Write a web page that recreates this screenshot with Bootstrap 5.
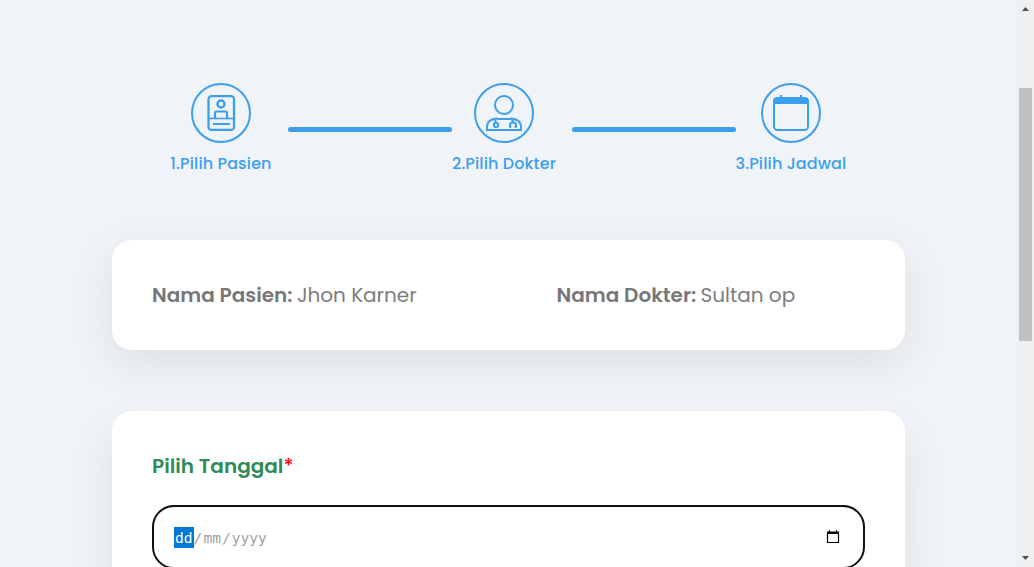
<!DOCTYPE html>
<html lang="id">
<head>
<meta charset="utf-8">
<meta name="viewport" content="width=device-width, initial-scale=1">
<title>Pilih Jadwal</title>
<link href="https://cdn.jsdelivr.net/npm/bootstrap@5.3.0/dist/css/bootstrap.min.css" rel="stylesheet">
<style>
html, body { height: 100%; overflow: hidden; }
body { background: #f0f3f8; color: #777; font-family: Poppins, Inter, "Open Sans", sans-serif; }
.page { padding-top: 83px; height: 567px; }
.steps { height: 96px; color: #3c9fee; }
.step-ring { width: 60px; height: 60px; border: 2px solid #3c9fee; }
.step-name { font-size: 16px; font-weight: 500; line-height: 24px; margin-top: 9px; letter-spacing: .12px; }
.step-line { width: 164px; height: 5px; border-radius: 3px; background: #3c9fee; margin-top: 44px; }
.s1 { width: 102px; margin-right: 16px; } .s2 { width: 104px; margin-right: 16px; } .s3 { width: 110px; margin-right: 1px; }
.panel { width: 793px; margin-left: 112px; border-radius: 20px; background: #fff; padding: 40px; box-shadow: 0 13px 44px rgba(0,0,0,.085); font-size: 20px; line-height: 30px; }
.info-panel { height: 110px; margin-top: 61px; }
.date-panel { height: 156px; margin-top: 61px; padding-bottom: 0; border-radius: 20px 20px 0 0; box-shadow: 0 22px 44px rgba(0,0,0,.085); }
.info-item { width: 404.5px; }
.info-item b { font-weight: 600; }
.info-item span { margin-left: -1px; letter-spacing: -.02px; color: #7c7c7c; }
.date-title { color: #2e8b57; font-weight: 600; }
.date-title span { color: #f00; font-weight: 500; }
.date-clip { height: 62px; margin-top: 24px; overflow: hidden; }
.date-box { height: 64px; padding: 0 23px 0 20px; border: 2px solid #111; border-radius: 22px; }
.date-mask { font: 14.6px/21px "DejaVu Sans Mono", monospace; color: #a0a0a0; }
.date-mask span { padding: 0 1px; }
.date-mask .picked { background: #0078d7; color: #fff; display: inline-block; }
.scroll-rail { width: 17px; background: #f0f0f0; }
.scroll-grip { width: 13px; height: 253px; background: #c1c1c1; margin-top: 74px; }
</style>
</head>
<body class="d-flex">
<main class="page flex-grow-1">
  <div class="steps d-flex justify-content-center">
    <div class="s1 d-flex flex-column align-items-center flex-shrink-0">
      <div class="step-ring rounded-circle d-flex align-items-center justify-content-center flex-shrink-0">
        <svg width="36" height="36" viewBox="0 0 36 36" fill="none" stroke="currentColor" stroke-width="2.300"><rect x="5.500" y="1.100" width="25.500" height="33.800" rx="3"/><circle cx="18" cy="9" r="3.500" stroke-width="2.500"/><path d="M12 23v-5q0-1.500 1.500-1.500h9q1.500 0 1.500 1.500v5M10 29h17" stroke-width="2.200"/><path d="M5.500 23.500h25" stroke-width="1.600"/></svg>
      </div>
      <div class="step-name text-nowrap">1.Pilih Pasien</div>
    </div>
    <div class="step-line flex-shrink-0"></div>
    <div class="s2 d-flex flex-column align-items-center flex-shrink-0">
      <div class="step-ring rounded-circle d-flex align-items-center justify-content-center flex-shrink-0">
        <svg width="36" height="36" viewBox="0 0 36 36" fill="none" stroke="currentColor" stroke-width="2"><circle cx="18" cy="10" r="9"/><path d="M12 23.500Q1 24 1 32v3h34v-3q0-8-11-8.500M11.500 24h13M9.500 24v4M26.500 24v3.500"/><circle cx="10" cy="30" r="2.200"/><path d="M25.500 31.800H24v-1.800q0-2.500 3-2.500t3 2.500v1.800h-1.500"/></svg>
      </div>
      <div class="step-name text-nowrap">2.Pilih Dokter</div>
    </div>
    <div class="step-line flex-shrink-0"></div>
    <div class="s3 d-flex flex-column align-items-center flex-shrink-0">
      <div class="step-ring rounded-circle d-flex align-items-center justify-content-center flex-shrink-0">
        <svg width="36" height="36" viewBox="0 0 36 36" fill="none" stroke="currentColor" stroke-width="2"><rect x="1" y="3.500" width="34" height="31.500" rx="3.500"/><path d="M1 8V6.500Q1 3 4.500 3h27Q35 3 35 6.500V8z" fill="currentColor"/><path d="M8 0v4M28 0v4"/></svg>
      </div>
      <div class="step-name text-nowrap">3.Pilih Jadwal</div>
    </div>
  </div>
  <section class="panel info-panel d-flex">
    <div class="info-item flex-shrink-0"><b>Nama Pasien:</b> <span>Jhon Karner</span></div>
    <div class="text-nowrap info-item"><b>Nama Dokter:</b> <span>Sultan op</span></div>
  </section>
  <section class="panel date-panel">
    <div class="date-title">Pilih Tanggal<span>*</span></div>
    <div class="date-clip">
      <div class="date-box d-flex align-items-center justify-content-between">
        <div class="date-mask text-nowrap"><span class="picked">dd</span>/<span>mm</span>/<span>yyyy</span></div>
        <svg width="14" height="16" viewBox="0 0 14 16"><path d="M1.500 3.500h11v10h-11z" fill="none" stroke="#000" stroke-width="1.200"/><path d="M1 2.500h12v2.500H1zM3 1.200h1v2H3zM10 1.200h1v2h-1z"/></svg>
      </div>
    </div>
  </section>
</main>
<aside class="scroll-rail d-flex flex-column align-items-center flex-shrink-0">
  <svg width="17" height="14" class="flex-shrink-0"><path d="M5 11h7L8.500 7z" fill="#505050"/></svg>
  <div class="scroll-grip flex-shrink-0"></div>
  <svg width="17" height="14" class="flex-shrink-0 mt-auto"><path d="M5 3h7L8.500 7z" fill="#505050"/></svg>
</aside>
<script src="https://cdn.jsdelivr.net/npm/bootstrap@5.3.0/dist/js/bootstrap.bundle.min.js"></script>
</body>
</html>
